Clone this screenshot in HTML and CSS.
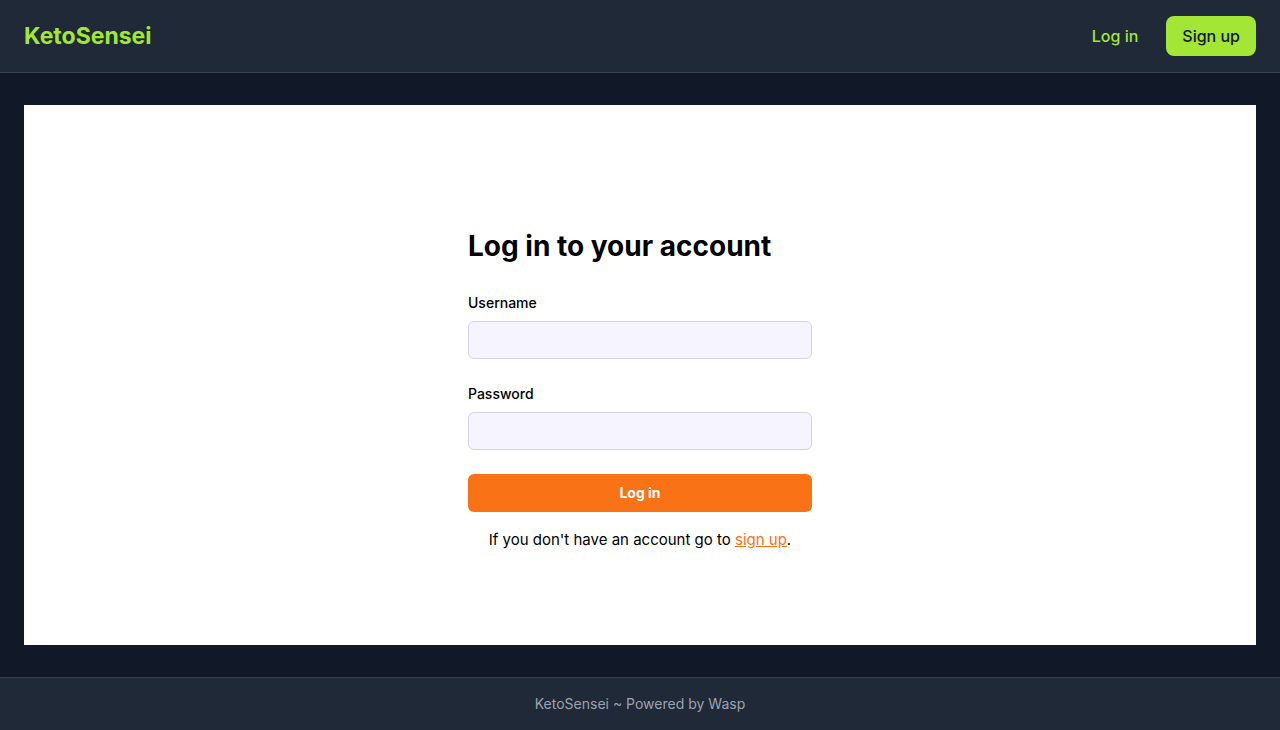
FILE: index.html
```html
<!DOCTYPE html>
<html lang="en">
<head>
<meta charset="utf-8">
<meta name="viewport" content="width=device-width, initial-scale=1">
<title>KetoSensei</title>
<link rel="stylesheet" href="styles.css">
</head>
<body>
<header class="header">
  <a class="brand" href="#">KetoSensei</a>
  <nav class="nav">
    <a class="nav-link" href="#">Log in</a>
    <a class="nav-button" href="#">Sign up</a>
  </nav>
</header>
<main class="main">
  <section class="panel">
    <form class="form">
      <h1 class="title">Log in to your account</h1>
      <div class="field">
        <label class="label" for="username">Username</label>
        <input class="input" id="username" type="text">
      </div>
      <div class="field">
        <label class="label" for="password">Password</label>
        <input class="input" id="password" type="password">
      </div>
      <button class="submit" type="submit">Log in</button>
      <p class="hint">If you don't have an account go to <a class="hint-link" href="#">sign up</a>.</p>
    </form>
  </section>
</main>
<footer class="footer">KetoSensei ~ Powered by Wasp</footer>
</body>
</html>
```
FILE: styles.css
```css
* {
  box-sizing: border-box;
}

body {
  margin: 0;
  min-height: 100vh;
  display: flex;
  flex-direction: column;
  background: #111827;
  font-family: Inter, "Liberation Sans", sans-serif;
  font-size: 16px;
  line-height: 24px;
}

.header {
  display: flex;
  justify-content: space-between;
  align-items: center;
  padding: 16px 24px;
  background: #1f2937;
  border-bottom: 1px solid #374151;
}

.brand {
  color: #a3e635;
  font-size: 23px;
  line-height: 32px;
  font-weight: 700;
  text-decoration: none;
}

.nav {
  display: flex;
  align-items: center;
  gap: 28px;
}

.nav-link {
  color: #a3e635;
  font-weight: 500;
  text-decoration: none;
}

.nav-button {
  padding: 8px 16px;
  border-radius: 8px;
  background: #a3e635;
  color: #111827;
  font-weight: 500;
  text-decoration: none;
}

.main {
  flex: 1;
  display: flex;
  padding: 32px 24px;
}

.panel {
  flex: 1;
  display: flex;
  justify-content: center;
  align-items: center;
  background: #fff;
}

.form {
  width: 344px;
  max-width: 100%;
  padding-top: 30px;
}

.title {
  margin: 0 0 28px;
  font-size: 28px;
  line-height: 36px;
  font-weight: 700;
}

.field {
  display: flex;
  flex-direction: column;
  gap: 8px;
  margin-bottom: 24px;
}

.label {
  font-size: 14px;
  line-height: 21px;
  font-weight: 500;
}

.input {
  width: 100%;
  height: 38px;
  padding: 8px 12px;
  border: 1px solid #d4d4dd;
  border-radius: 6px;
  background: #f6f4ff;
  font: inherit;
}

.submit {
  width: 100%;
  height: 38px;
  border: 0;
  border-radius: 6px;
  background: #f97316;
  color: #fff;
  font: inherit;
  font-size: 14px;
  font-weight: 700;
}

.hint {
  margin: 16px 0 0;
  font-size: 15px;
  text-align: center;
}

.hint-link {
  color: #f97316;
}

.footer {
  padding: 16px 24px;
  border-top: 1px solid #374151;
  background: #1f2937;
  color: #9ca3af;
  font-size: 14px;
  line-height: 20px;
  text-align: center;
}
```
